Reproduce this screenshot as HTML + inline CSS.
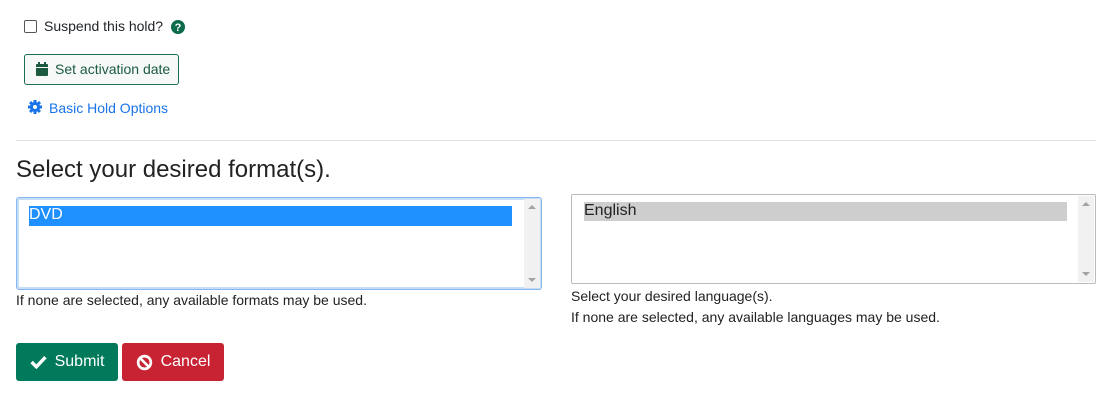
<!DOCTYPE html>
<html><head><style>
body{margin:0;width:1118px;height:409px;background:#fff;font-family:"Liberation Sans",Arial,sans-serif;position:relative;overflow:hidden;color:#212529}
.a{position:absolute}
.sel{position:absolute;background:#fff;box-sizing:border-box}
.sb{position:absolute;top:1px;bottom:1px;right:1px;width:16px;background:#f1f1f1}
.sb:before{content:"";position:absolute;left:4px;top:6px;border:4px solid transparent;border-bottom:4px solid #a3a3a3;border-top:0}
.sb:after{content:"";position:absolute;left:4px;bottom:6px;border:4px solid transparent;border-top:4px solid #a3a3a3;border-bottom:0}
.btn{position:absolute;color:#fff;font-size:16px;border-radius:3px;display:flex;align-items:center;justify-content:center;gap:8px;box-sizing:border-box}
.sm{font-size:14px;color:#222;white-space:nowrap}
</style></head><body>
<div class="a" style="left:24px;top:20px;width:13px;height:13px;border:1px solid #555;border-radius:2px;box-sizing:border-box"></div>
<div class="a" style="left:44px;top:18px;font-size:14px">Suspend this hold?</div>
<svg class="a" style="left:171px;top:20px" width="14" height="14" viewBox="0 0 14 14"><circle cx="7" cy="7" r="7" fill="#0b6b4a"/><text x="7" y="11" text-anchor="middle" font-size="11" font-weight="bold" fill="#fff" font-family="Liberation Sans">?</text></svg>
<div class="a" style="left:24px;top:54px;width:155px;height:31px;border:1px solid #1c6e4d;border-radius:3px;background:#f6f9f8;box-sizing:border-box"></div>
<svg class="a" style="left:36px;top:62px" width="12" height="14" viewBox="0 0 12 14"><rect x="2" y="0" width="2" height="3" fill="#1c5a40"/><rect x="8" y="0" width="2" height="3" fill="#1c5a40"/><rect x="0" y="2" width="12" height="12" rx="1" fill="#1c5a40"/><rect x="0" y="5" width="12" height="1" fill="#f6f9f8"/></svg>
<div class="a" style="left:55px;top:61px;font-size:14px;color:#1c5a40">Set activation date</div>
<svg class="a" style="left:28px;top:100px" width="14" height="14" viewBox="0 0 14 14"><g fill="#1a73e8"><circle cx="7" cy="7" r="5"/><rect x="5.5" y="0" width="3" height="14"/><rect x="0" y="5.5" width="14" height="3"/><rect x="5.5" y="0" width="3" height="14" transform="rotate(45 7 7)"/><rect x="5.5" y="0" width="3" height="14" transform="rotate(-45 7 7)"/></g><circle cx="7" cy="7" r="2" fill="#fff"/></svg>
<div class="a" style="left:49px;top:100px;font-size:14px;color:#1a73e8">Basic Hold Options</div>
<div class="a" style="left:16px;top:140px;width:1080px;height:1px;background:#e2e2e2"></div>
<div class="a" style="left:16px;top:156px;font-size:24px;color:#222">Select your desired format(s).</div>
<div class="sel" style="left:16px;top:197px;width:526px;height:93px;border:1px solid #86b7f0;border-radius:3px;box-shadow:0 0 0 2px #c6ddf8 inset"><div class="a" style="left:12px;top:8px;width:483px;height:20px;background:#1e90ff;color:#fff;font-size:16px;line-height:18px">DVD</div><div class="sb"></div></div>
<div class="a sm" style="left:16px;top:292px">If none are selected, any available formats may be used.</div>
<div class="sel" style="left:571px;top:194px;width:525px;height:90px;border:1px solid #bbb;border-radius:2px"><div class="a" style="left:12px;top:7px;width:483px;height:19px;background:#cecece;color:#222;font-size:16px;line-height:18px">English</div><div class="sb"></div></div>
<div class="a sm" style="left:571px;top:288px">Select your desired language(s).</div>
<div class="a sm" style="left:571px;top:309px">If none are selected, any available languages may be used.</div>
<div class="btn" style="left:16px;top:343px;width:102px;height:38px;background:#007a5a"><svg width="17" height="14" viewBox="0 0 16 13"><path d="M1.5 6.5l4.5 4.5L14.5 2" stroke="#fff" stroke-width="3.2" fill="none"/></svg>Submit</div>
<div class="btn" style="left:122px;top:343px;width:102px;height:38px;background:#c82333"><svg width="17" height="17" viewBox="0 0 16 16"><circle cx="8" cy="8" r="6" stroke="#fff" stroke-width="2.5" fill="none"/><path d="M3.8 3.8l8.4 8.4" stroke="#fff" stroke-width="2.5"/></svg>Cancel</div>
</body></html>
